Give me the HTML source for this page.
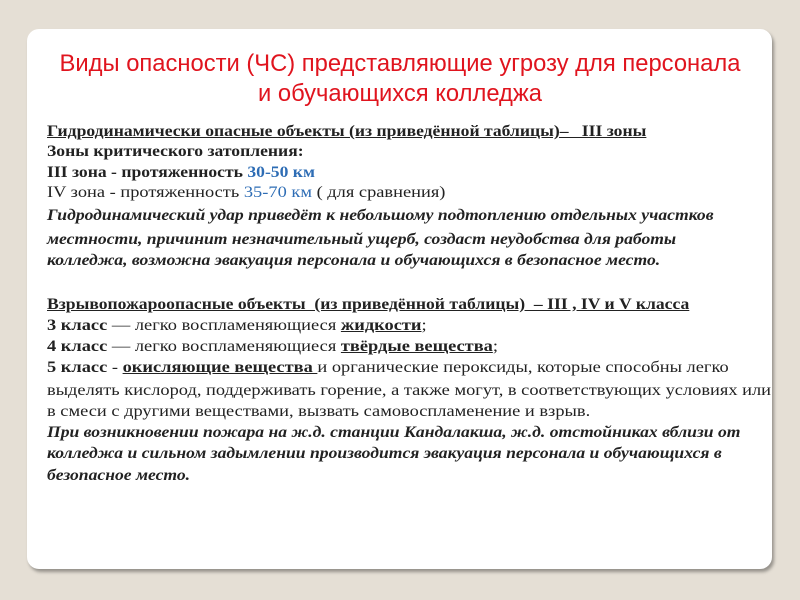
<!DOCTYPE html>
<html><head><meta charset="utf-8"><style>
body{margin:0;width:800px;height:600px;background:#e5dfd5;position:relative;overflow:hidden}
.card{position:absolute;left:27px;top:29px;width:745px;height:540px;background:#fff;border-radius:12px;box-shadow:2px 3px 3px rgba(0,0,0,.35)}
.t{position:absolute;left:0;width:800px;text-align:center;color:#e0141e;font:24px "Liberation Sans",sans-serif;transform:scaleX(0.99)}
.l{position:absolute;left:47px;font:16px "Liberation Serif",serif;color:#222;white-space:nowrap;transform-origin:0 0;transform:scaleX(1.1)}
.r{transform:scaleX(1.15)}
.b{font-weight:bold}.u{text-decoration:underline}.i{font-style:italic;font-weight:bold}
.bl{color:#2e6db5}
</style></head><body>
<div class="card"></div>
<div class="t" style="top:50px">Виды опасности (ЧС) представляющие угрозу для персонала</div>
<div class="t" style="top:80px">и обучающихся колледжа</div>
<div class="l b u" style="top:123px">Гидродинамически опасные объекты (из приведённой таблицы)–&nbsp;&nbsp; III зоны</div>
<div class="l b" style="top:143px">Зоны критического затопления:</div>
<div class="l b" style="top:164px">III зона - протяженность <span class="bl">30-50 км</span></div>
<div class="l r" style="top:184px">IV зона - протяженность <span class="bl">35-70 км</span> ( для сравнения)</div>
<div class="l i" style="top:207px">Гидродинамический удар приведёт к небольшому подтоплению отдельных участков</div>
<div class="l i" style="top:231px">местности, причинит незначительный ущерб, создаст неудобства для работы</div>
<div class="l i" style="top:252px">колледжа, возможна эвакуация персонала и обучающихся в безопасное место.</div>
<div class="l b u" style="top:296px">Взрывопожароопасные объекты&nbsp; (из приведённой таблицы)&nbsp; – III , IV и V класса</div>
<div class="l r" style="top:317px"><b>3 класс</b> — легко воспламеняющиеся <b class="u">жидкости</b>;</div>
<div class="l r" style="top:338px"><b>4 класс</b> — легко воспламеняющиеся <b class="u">твёрдые вещества</b>;</div>
<div class="l r" style="top:359px"><b>5 класс</b> - <b class="u">окисляющие вещества </b>и органические пероксиды, которые способны легко</div>
<div class="l r" style="top:382px">выделять кислород, поддерживать горение, а также могут, в соответствующих условиях или</div>
<div class="l r" style="top:403px">в смеси с другими веществами, вызвать самовоспламенение и взрыв.</div>
<div class="l i" style="top:424px">При возникновении пожара на ж.д. станции Кандалакша, ж.д. отстойниках вблизи от</div>
<div class="l i" style="top:445px">колледжа и сильном задымлении производится эвакуация персонала и обучающихся в</div>
<div class="l i" style="top:467px">безопасное место.</div>
</body></html>
